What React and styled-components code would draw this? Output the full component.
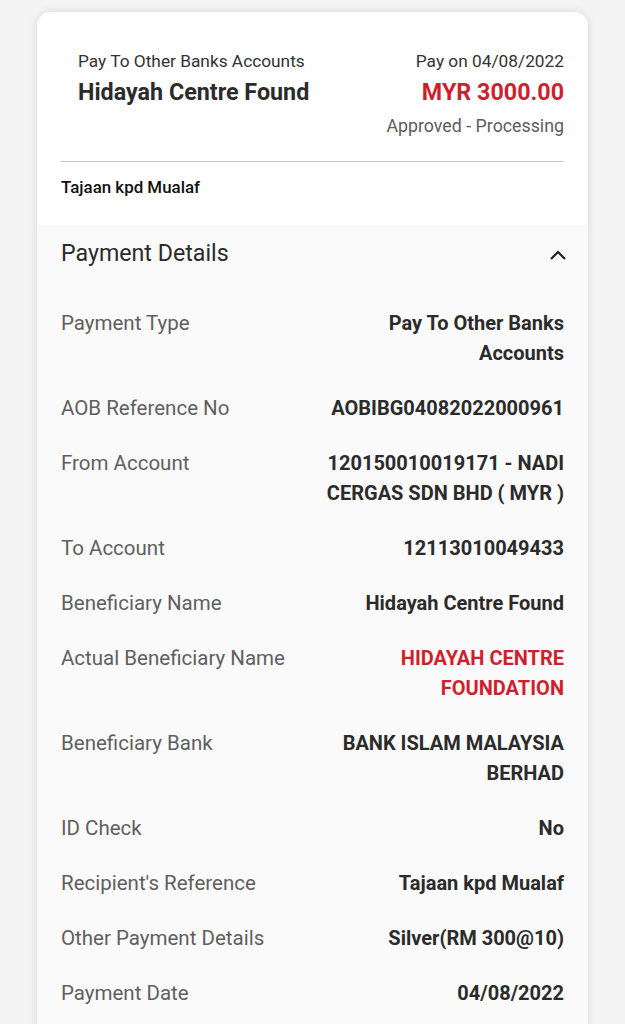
import React from "react";
import styled, { createGlobalStyle } from "styled-components";

const Global = createGlobalStyle`
  html, body { margin: 0; padding: 0; background: #f4f4f4; }
  body { font-family: Roboto, "Noto Sans", Arial, sans-serif; -webkit-font-smoothing: antialiased; }
  * { box-sizing: border-box; }
`;

const Page = styled.div`
  padding: 12px 37px 0 37px;
  min-height: 1024px;
`;

const Card = styled.div`
  background: #fafafa;
  border-radius: 14px 14px 0 0;
  box-shadow: 0 0 8px rgba(0, 0, 0, 0.12);
  overflow: hidden;
  min-height: 1012px;
`;

const Top = styled.div`
  background: #ffffff;
  padding: 37px 24px 26px 24px;
`;

const HeaderRow = styled.div`
  display: flex;
  justify-content: space-between;
  padding-left: 17px;
`;

const Col = styled.div`
  display: flex;
  flex-direction: column;
  align-items: ${(p) => (p.$right ? "flex-end" : "flex-start")};
`;

const Small = styled.div`
  font-size: 17.3px;
  line-height: 24px;
  color: #333;
`;

const Big = styled.div`
  font-size: 23.3px;
  line-height: 38px;
  font-weight: 700;
  color: ${(p) => (p.$red ? "#cf1f2e" : "#2b2b2b")};
`;

const Status = styled.div`
  font-size: 17.8px;
  line-height: 30px;
  color: #5c5c5c;
`;

const Divider = styled.hr`
  border: 0;
  border-top: 1px solid #c8c8c8;
  margin: 20px 0 13px 0;
`;

const Note = styled.div`
  font-size: 16.9px;
  line-height: 24px;
  color: #111;
  font-weight: 500;
`;

const Details = styled.div`
  padding: 13px 24px 40px 24px;
`;

const DetailsHead = styled.div`
  display: flex;
  justify-content: space-between;
  align-items: center;
  height: 30px;
  margin-bottom: 40px;
`;

const Title = styled.div`
  font-size: 23.2px;
  line-height: 30px;
  color: #2a2a2a;
`;

const Chevron = styled.svg`
  width: 18px;
  height: 12px;
  margin-right: -3px;
  margin-top: 4px;
`;

const Rows = styled.div`
  display: flex;
  flex-direction: column;
  gap: 25px;
`;

const Row = styled.div`
  display: flex;
  justify-content: space-between;
  align-items: flex-start;
  gap: 16px;
`;

const Label = styled.div`
  font-size: 20.5px;
  line-height: 30px;
  color: #5f5f5f;
  white-space: nowrap;
`;

const Value = styled.div`
  font-size: 20px;
  line-height: 30px;
  font-weight: 700;
  text-align: right;
  max-width: 240px;
  color: ${(p) => (p.$red ? "#cf1f2e" : "#2b2b2b")};
`;

const rows = [
  ["Payment Type", "Pay To Other Banks Accounts"],
  ["AOB Reference No", "AOBIBG04082022000961"],
  ["From Account", "120150010019171 - NADI CERGAS SDN BHD ( MYR )"],
  ["To Account", "12113010049433"],
  ["Beneficiary Name", "Hidayah Centre Found"],
  ["Actual Beneficiary Name", "HIDAYAH CENTRE FOUNDATION", true],
  ["Beneficiary Bank", "BANK ISLAM MALAYSIA BERHAD"],
  ["ID Check", "No"],
  ["Recipient's Reference", "Tajaan kpd Mualaf"],
  ["Other Payment Details", "Silver(RM 300@10)"],
  ["Payment Date", "04/08/2022"],
];

export default function App() {
  return (
    <>
      <Global />
      <Page>
        <Card>
          <Top>
            <HeaderRow>
              <Col>
                <Small>Pay To Other Banks Accounts</Small>
                <Big>Hidayah Centre Found</Big>
              </Col>
              <Col $right>
                <Small>Pay on 04/08/2022</Small>
                <Big $red>MYR 3000.00</Big>
                <Status>Approved - Processing</Status>
              </Col>
            </HeaderRow>
            <Divider />
            <Note>Tajaan kpd Mualaf</Note>
          </Top>
          <Details>
            <DetailsHead>
              <Title>Payment Details</Title>
              <Chevron viewBox="0 0 18 12">
                <path d="M2 10 L9 3 L16 10" fill="none" stroke="#222" strokeWidth="2.2" />
              </Chevron>
            </DetailsHead>
            <Rows>
              {rows.map(([l, v, red]) => (
                <Row key={l}>
                  <Label>{l}</Label>
                  <Value $red={red}>{v}</Value>
                </Row>
              ))}
            </Rows>
          </Details>
        </Card>
      </Page>
    </>
  );
}
